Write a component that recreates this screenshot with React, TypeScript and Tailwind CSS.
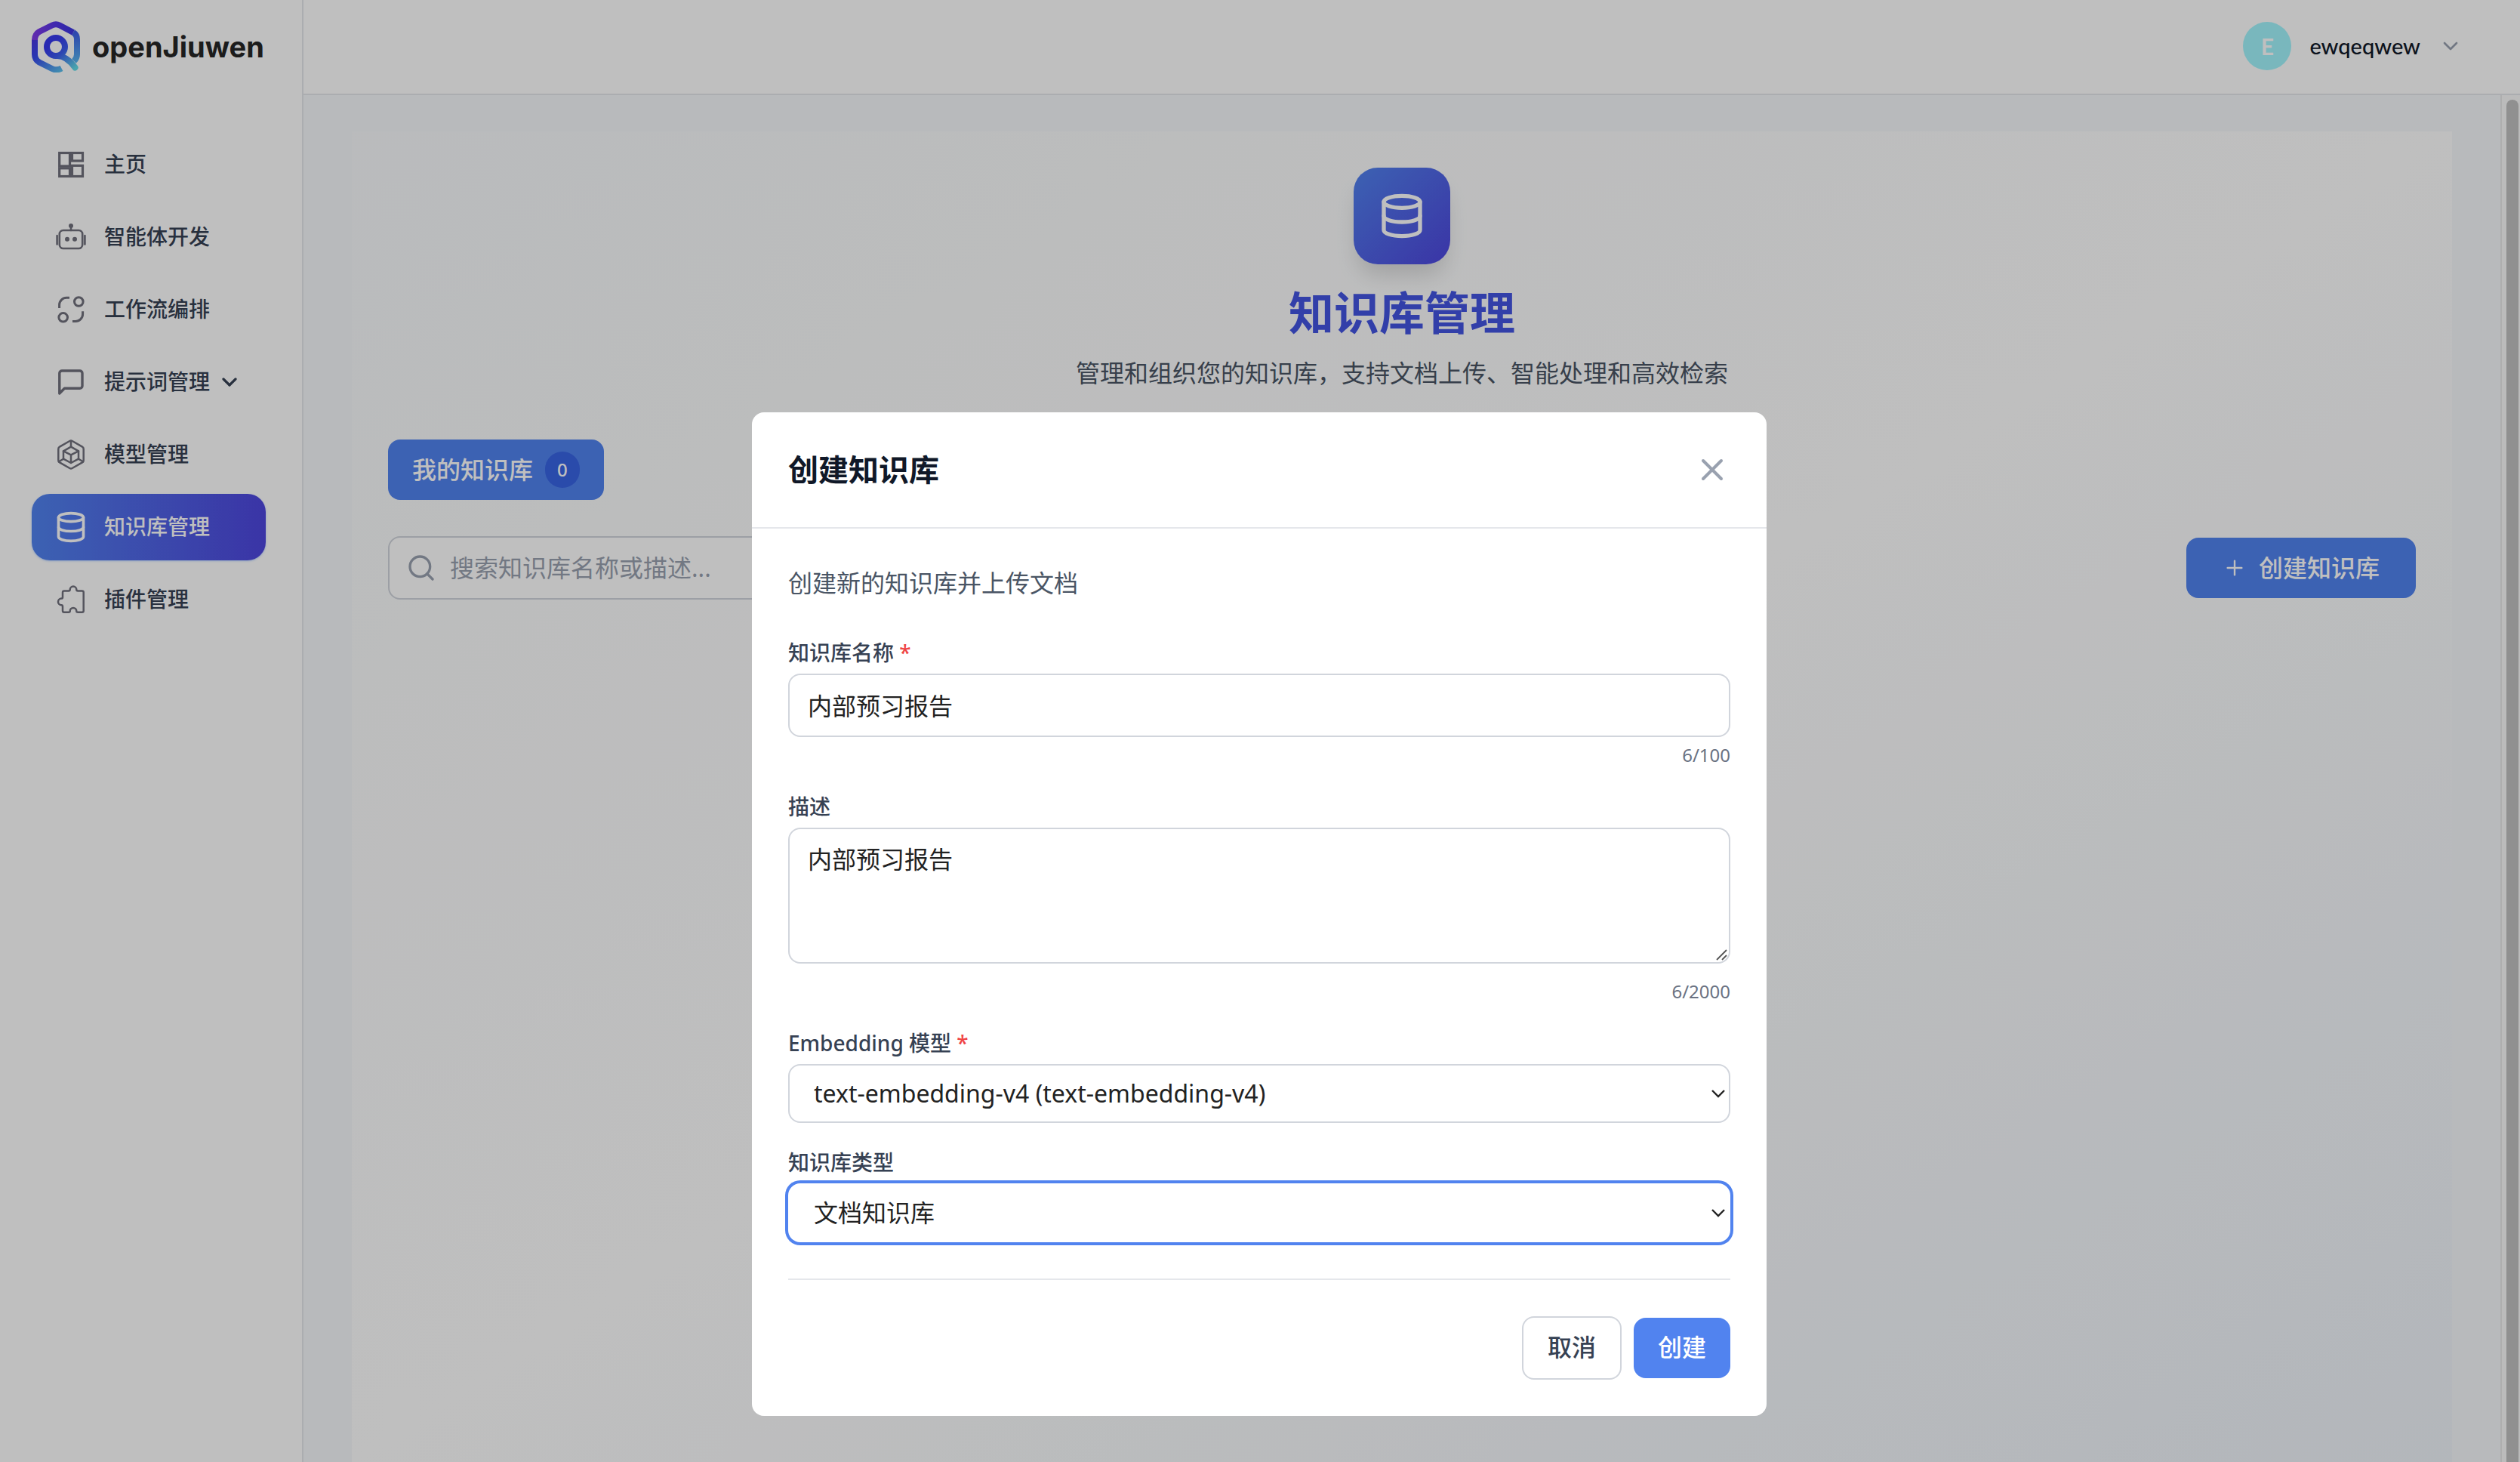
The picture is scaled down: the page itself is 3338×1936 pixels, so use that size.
import { ReactNode } from 'react';
import { ChevronDown, Database, Plus, Search, X } from 'lucide-react';

/* ---------- 图标 ---------- */

function NavSvg({ children, width = 3 }: { children: ReactNode; width?: number }) {
  return (
    <svg
      viewBox="0 0 44 44"
      className="size-11 shrink-0 text-[#70707d]"
      fill="none"
      stroke="currentColor"
      strokeWidth={width}
      strokeLinecap="round"
      strokeLinejoin="round"
      aria-hidden="true"
    >
      {children}
    </svg>
  );
}

const HomeIcon = () => (
  <NavSvg width={3.2}>
    <g strokeLinejoin="miter">
      <rect x="6.7" y="6.5" width="13.8" height="17.5" />
      <rect x="23.5" y="6.5" width="14" height="10.5" />
      <rect x="6.7" y="26.8" width="13.8" height="10.7" />
      <rect x="23.5" y="23.3" width="14" height="14.2" />
    </g>
  </NavSvg>
);

const BotIcon = () => (
  <NavSvg width={2.6}>
    <rect x="6.8" y="13" width="30.4" height="24" rx="5" />
    <path d="M22 8v5M3.6 20v11.5M40.4 20v11.5" />
    <g fill="currentColor" stroke="none">
      <circle cx="22" cy="7" r="3" />
      <circle cx="17" cy="24.7" r="3" />
      <circle cx="27" cy="24.7" r="3" />
    </g>
  </NavSvg>
);

const FlowIcon = () => (
  <NavSvg>
    <g strokeLinecap="butt">
      <path d="M6.6 20v-4.2a9.5 9.5 0 0 1 9.5-9.5H20" />
      <path d="M37.6 24.3v3.6a9.5 9.5 0 0 1-9.5 9.5H24" />
    </g>
    <circle cx="32.3" cy="11.5" r="5.8" />
    <circle cx="11.7" cy="32.3" r="5.8" />
  </NavSvg>
);

const ChatIcon = () => (
  <NavSvg width={3.4}>
    <path d="M37 27a3.3 3.3 0 0 1-3.3 3.3H13.4L6.8 37V10.3A3.3 3.3 0 0 1 10.1 7h23.6a3.3 3.3 0 0 1 3.3 3.3z" />
  </NavSvg>
);

const ModelIcon = () => (
  <NavSvg width={2.5}>
    <path d="M20.3 4a3.4 3.4 0 0 1 3.4 0l13.3 7.6a3.4 3.4 0 0 1 1.7 3v14.8a3.4 3.4 0 0 1-1.7 3L23.7 40a3.4 3.4 0 0 1-3.4 0L7 32.4a3.4 3.4 0 0 1-1.7-3V14.6a3.4 3.4 0 0 1 1.7-3z" />
    <path d="M22 11.7l10 5.6v10.4L22 33l-10-5.3V17.3z" />
    <path d="M12 17.3l10 5 10-5M22 22.3V33M22 4v7.7M12 27.7l-6 3.6M32 27.7l6 3.6" />
  </NavSvg>
);

const PluginIcon = () => (
  <NavSvg width={2.5}>
    <path d="M13 10.5h5.8c1.2 0 1.9-.6 1.9-1.7a4.3 4.3 0 0 1 8.6 0c0 1.1.7 1.7 1.9 1.7h5.5a2 2 0 0 1 2 2v24.2a2 2 0 0 1-2 2h-5.5c-1.2 0-1.9-.6-1.9-1.5a4.3 4.3 0 0 0-8.6 0c0 .9-.7 1.5-1.9 1.5H13a2 2 0 0 1-2-2v-5.5c0-1.2-.6-2-1.7-2a4.3 4.3 0 0 1 0-8.6c1.1 0 1.7-.7 1.7-1.9v-6.2a2 2 0 0 1 2-2z" />
  </NavSvg>
);

function Logo() {
  return (
    <svg viewBox="0 0 64 68" className="h-[68px] w-16 shrink-0" fill="none" strokeWidth="8" aria-hidden="true">
      <defs>
        <linearGradient id="logo-top" gradientUnits="userSpaceOnUse" x1="4" y1="20" x2="58" y2="14">
          <stop offset="0" stopColor="#7f3ae8" />
          <stop offset="0.5" stopColor="#5836ea" />
          <stop offset="1" stopColor="#3836e0" />
        </linearGradient>
        <linearGradient id="logo-right" gradientUnits="userSpaceOnUse" x1="58" y1="14" x2="60" y2="54">
          <stop offset="0" stopColor="#3d5ce8" />
          <stop offset="1" stopColor="#58b4ee" />
        </linearGradient>
        <linearGradient id="logo-left" gradientUnits="userSpaceOnUse" x1="4" y1="20" x2="38" y2="66">
          <stop offset="0" stopColor="#4a34e0" />
          <stop offset="0.4" stopColor="#3648ee" />
          <stop offset="1" stopColor="#58bcec" />
        </linearGradient>
        <linearGradient id="logo-q" gradientUnits="userSpaceOnUse" x1="28" y1="28" x2="58" y2="62">
          <stop offset="0" stopColor="#3638ee" />
          <stop offset="0.4" stopColor="#3c5cee" />
          <stop offset="1" stopColor="#62dce8" />
        </linearGradient>
      </defs>
      <path d="M4 24v20q0 7 6 10.5l17 8.5q6 3 12.5-.5" stroke="url(#logo-left)" />
      <path d="M55 15q5 3 5 9v20q0 5-4 9" stroke="url(#logo-right)" />
      <path d="M4 25q0-7.5 6-11l17-8.5q5-2.5 10 0l18 9.5" stroke="url(#logo-top)" />
      <circle cx="32" cy="34" r="12" stroke="url(#logo-q)" />
      <path d="M34 46q12 0 23.5 15.5" stroke="url(#logo-q)" strokeLinecap="round" />
    </svg>
  );
}

/* ---------- 侧边栏 ---------- */

const navItems = [
  { label: '主页', icon: <HomeIcon /> },
  { label: '智能体开发', icon: <BotIcon /> },
  { label: '工作流编排', icon: <FlowIcon /> },
  { label: '提示词管理', icon: <ChatIcon />, expandable: true },
  { label: '模型管理', icon: <ModelIcon /> },
  { label: '知识库管理', icon: <Database className="size-11 shrink-0" />, active: true },
  { label: '插件管理', icon: <PluginIcon /> },
];

function Sidebar() {
  return (
    <aside className="w-[402px] shrink-0 border-r-2 border-gray-200 bg-white">
      <div className="flex h-[124px] items-center gap-4 pl-[42px]">
        <Logo />
        <span className="font-['Inter',sans-serif] text-[38px] leading-none font-bold text-[#262626]">
          openJiuwen
        </span>
      </div>
      <nav className="flex flex-col gap-2 px-[42px] pt-[50px] pr-12">
        {navItems.map((item) => (
          <a
            key={item.label}
            href="#"
            className={
              item.active
                ? 'flex h-[88px] items-center gap-[22px] rounded-3xl bg-linear-to-r/srgb from-[#5183ef] to-[#4e46de] pl-[30px] text-[28px] font-medium text-white shadow-sm shadow-blue-500/30'
                : 'flex h-[88px] items-center gap-[22px] rounded-3xl pl-[30px] text-[28px] font-medium text-gray-700'
            }
          >
            {item.icon}
            <span className="pb-0.5">{item.label}</span>
            {item.expandable && <ChevronDown className="-ml-3 size-8" strokeWidth={2.4} />}
          </a>
        ))}
      </nav>
    </aside>
  );
}

/* ---------- 顶栏 ---------- */

function Header() {
  return (
    <header className="flex h-[126px] shrink-0 items-center justify-end border-b-2 border-gray-200 bg-white pr-[76px] pb-0.5">
      <button type="button" className="flex items-center gap-6 font-['Lato',sans-serif]">
        <span className="flex size-16 items-center justify-center rounded-full bg-cyan-200 text-[30px] font-bold text-white">
          E
        </span>
        <span className="text-[29px] font-medium text-gray-900">ewqeqwew</span>
        <ChevronDown className="size-8 text-gray-400" />
      </button>
    </header>
  );
}

/* ---------- 知识库页面 ---------- */

function KnowledgeBase() {
  return (
    <main className="min-w-0 flex-1 overflow-hidden bg-[#f6f8fb] px-16 pt-12">
      <section className="min-h-full bg-linear-to-br/srgb from-slate-50 via-white to-[#eff4fa] p-12">
        <div className="flex flex-col items-center">
          <div className="mb-7 flex size-32 items-center justify-center rounded-[32px] bg-linear-to-br/srgb from-[#5183ef] to-[#4e46de] shadow-[0_20px_30px_-6px_rgba(0,0,0,0.15)]">
            <Database className="size-16 text-white" />
          </div>
          <h1 className="mb-5 text-[60px] leading-[72px] font-bold text-[#4355e2]">知识库管理</h1>
          <p className="text-[32px] leading-[48px] text-gray-600">
            管理和组织您的知识库，支持文档上传、智能处理和高效检索
          </p>
        </div>

        <div className="mt-16 flex">
          <button
            type="button"
            className="flex h-20 items-center gap-4 rounded-2xl bg-[#5183ef] px-8 text-[32px] font-medium text-white"
          >
            我的知识库
            <span className="flex h-12 items-center rounded-full bg-[#3864e4] px-4 text-2xl">0</span>
          </button>
        </div>

        <div className="mt-12 flex items-center justify-between">
          <label className="flex h-[84px] w-[896px] items-center gap-[18px] rounded-2xl border-2 border-gray-300 bg-white pl-[22px]">
            <Search className="size-10 text-gray-400" />
            <input
              type="search"
              placeholder="搜索知识库名称或描述..."
              aria-label="搜索知识库"
              className="flex-1 text-[32px] outline-none placeholder:text-gray-400"
            />
          </label>
          <button
            type="button"
            className="flex h-20 items-center gap-4 rounded-2xl bg-[#5183ef] px-12 text-[32px] font-medium text-white"
          >
            <Plus className="size-8" strokeWidth={1.8} />
            创建知识库
          </button>
        </div>
      </section>
    </main>
  );
}

/* ---------- 创建弹窗 ---------- */

const labelClass = 'mb-2 block text-[28px] leading-10 font-medium text-gray-700';

function SelectArrow() {
  return (
    <svg
      viewBox="0 0 20 12"
      className="pointer-events-none absolute top-1/2 right-1.5 h-3 w-5 -translate-y-1/2"
      fill="none"
      stroke="#222"
      strokeWidth="2.4"
      aria-hidden="true"
    >
      <path d="M2 2l8 8 8-8" />
    </svg>
  );
}

function CreateDialog() {
  return (
    <div className="fixed inset-0 flex items-start justify-center bg-black/25 pt-[546px] pr-0.5">
      <div role="dialog" aria-labelledby="dialog-title" className="w-[1344px] rounded-2xl bg-white">
        <div className="flex items-center justify-between border-b-2 border-gray-200 p-12">
          <h2 id="dialog-title" className="text-[40px] leading-[56px] font-bold text-gray-900">
            创建知识库
          </h2>
          <button type="button" aria-label="关闭" className="text-gray-400">
            <X className="size-12" />
          </button>
        </div>

        <form className="p-12">
          <p className="mb-12 text-[32px] leading-[48px] text-gray-600">创建新的知识库并上传文档</p>

          <div className="flex flex-col gap-8">
            <div>
              <label htmlFor="kb-name" className={labelClass}>
                知识库名称 <span className="text-[#ef4444]">*</span>
              </label>
              <input
                id="kb-name"
                defaultValue="内部预习报告"
                className="block h-[84px] w-full rounded-2xl border-2 border-gray-300 px-6 pb-0.5 text-[32px] text-[#222] outline-none"
              />
              <p className="mt-2 text-right text-2xl leading-8 text-gray-500">6/100</p>
            </div>

            <div>
              <label htmlFor="kb-desc" className={labelClass}>
                描述
              </label>
              <div className="relative">
                <textarea
                  id="kb-desc"
                  rows={3}
                  defaultValue="内部预习报告"
                  className="block h-[180px] w-full resize-none rounded-2xl border-2 border-gray-300 px-6 py-4 text-[32px] leading-[48px] text-[#222] outline-none"
                />
                <svg
                  viewBox="0 0 16 16"
                  className="pointer-events-none absolute right-1 bottom-1 size-4"
                  stroke="#555"
                  strokeWidth="1.8"
                  aria-hidden="true"
                >
                  <path d="M2 15L15 2M9 15l6-6" />
                </svg>
              </div>
              <p className="mt-[21px] text-right text-2xl leading-8 text-gray-500">6/2000</p>
            </div>

            <div>
              <label htmlFor="kb-model" className={labelClass}>
                Embedding 模型 <span className="text-[#ef4444]">*</span>
              </label>
              <div className="relative">
                <select
                  id="kb-model"
                  className="block h-[78px] w-full appearance-none rounded-2xl border-2 border-gray-300 bg-white px-8 text-[32px] text-[#222] outline-none"
                >
                  <option>text-embedding-v4 (text-embedding-v4)</option>
                </select>
                <SelectArrow />
              </div>
            </div>

            <div>
              <label htmlFor="kb-type" className={labelClass}>
                知识库类型
              </label>
              <div className="relative">
                <select
                  id="kb-type"
                  className="block h-[78px] w-full appearance-none rounded-2xl border-2 border-transparent bg-white px-8 text-[32px] text-[#222] ring-4 ring-[#5183ef] outline-none"
                >
                  <option>文档知识库</option>
                </select>
                <SelectArrow />
              </div>
            </div>
          </div>

          <div className="mt-12 flex items-center justify-end gap-4 border-t-2 border-gray-200 pt-12">
            <button
              type="button"
              className="h-[84px] rounded-2xl border-2 border-gray-300 px-8 pb-0.5 text-[32px] font-medium text-gray-700"
            >
              取消
            </button>
            <button
              type="button"
              className="h-20 rounded-2xl bg-[#5183ef] px-8 pb-0.5 text-[32px] font-medium text-white"
            >
              创建
            </button>
          </div>
        </form>
      </div>
    </div>
  );
}

export default function App() {
  return (
    <div className="flex h-screen overflow-hidden bg-white font-['Noto_Sans','Noto_Sans_CJK_SC',sans-serif]">
      <Sidebar />
      <div className="flex min-w-0 flex-1 flex-col">
        <Header />
        <div className="flex min-h-0 flex-1">
          <KnowledgeBase />
          <div className="w-[26px] shrink-0 border-l-2 border-[#e8e8e8] bg-[#fafafa] pt-1.5 pl-1.5">
            <div className="h-full w-4 rounded-t-full bg-[#c1c1c1]" />
          </div>
        </div>
      </div>
      <CreateDialog />
    </div>
  );
}
